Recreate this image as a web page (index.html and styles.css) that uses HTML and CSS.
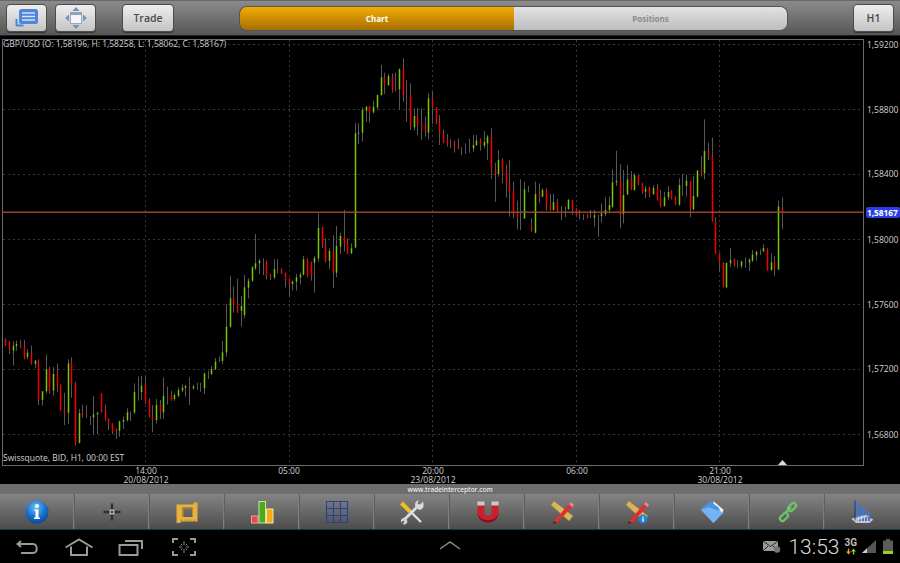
FILE: index.html
```html
<!DOCTYPE html>
<html lang="en">
<head>
<meta charset="utf-8">
<title>Trade Interceptor chart</title>
<link rel="stylesheet" href="styles.css">
</head>
<body>
<div class="app">
  <header class="topbar">
    <button class="btn btn-icon">
      <svg width="26" height="20" viewBox="0 0 26 20"><path d="M2.500 11v6.500h7" fill="none" stroke="#4a86dc" stroke-width="2" stroke-linejoin="round"/><rect x="5" y="1" width="19" height="15" rx="2.500" fill="#4f86dc"/><path d="M8 5h13M8 8.500h13M8 12h13" stroke="#d5e3f6" stroke-width="1.600"/></svg>
    </button>
    <button class="btn btn-icon">
      <svg width="24" height="24" viewBox="0 0 24 24"><path d="M12 1l3.500 4h-7zM12 23l-3.500-4h7zM1 12l4-3.500v7zM23 12l-4 3.500v-7z" fill="#6d94c8"/><rect x="6.500" y="6.500" width="11" height="11" fill="#f6f6f6" stroke="#a0a4aa"/><rect x="7" y="7" width="10" height="2" fill="#8fa4c0"/></svg>
    </button>
    <button class="btn btn-trade">Trade</button>
    <div class="tabs">
      <div class="tab tab-on">Chart</div>
      <div class="tab tab-off">Positions</div>
    </div>
    <button class="btn btn-h1">H1</button>
  </header>

  <main class="chart">
    <svg id="plot" class="plot" width="900" height="448" viewBox="0 36 900 448">
      <g id="grid"></g>
      <rect class="frame" x="2.500" y="39.500" width="861" height="426"/>
      <g id="candles"></g>
      <rect class="priceline" x="2" y="211.500" width="862" height="1.400"/>
      <text class="lbl" x="3" y="47">GBP/USD (O: 1,58196, H: 1,58258, L: 1,58062, C: 1,58167)</text>
      <text class="lbl" x="3" y="461">Swissquote, BID, H1, 00:00 EST</text>
      <path class="marker" d="M778 465l4.500-5 4.500 5z"/>
      <rect class="pricetag" x="866" y="207" width="34" height="11" rx="2"/>
      <text class="tagtext" x="867" y="216">1,58167</text>
      <g id="axis"></g>
    </svg>
  </main>

  <div class="strip">www.tradeinterceptor.com</div>

  <nav class="tools">
    <div class="tool">
      <svg width="28" height="28" viewBox="0 0 28 28"><defs><radialGradient id="ib" cx="45%" cy="30%" r="75%"><stop offset="0" stop-color="#6fc0f5"/><stop offset=".55" stop-color="#1a72cc"/><stop offset="1" stop-color="#0a3f96"/></radialGradient></defs><circle cx="14" cy="14" r="11.500" fill="url(#ib)"/><circle cx="14" cy="8" r="2" fill="#fff"/><path d="M11.500 11.500h4v8h1.500v1.500h-6v-1.500h1.500v-6.500h-1z" fill="#fff"/></svg>
    </div>
    <div class="tool">
      <svg width="28" height="28" viewBox="0 0 28 28"><path d="M14 5.500v7M14 15.500v7M5.500 14h7M15.500 14h7" stroke="#2b3238" stroke-width="2.400"/><rect x="11.500" y="11.500" width="5" height="5" fill="#a9b8c2"/><rect x="13" y="13" width="2" height="2" fill="#2b3238"/></svg>
    </div>
    <div class="tool">
      <svg width="28" height="28" viewBox="0 0 28 28"><path fill-rule="evenodd" d="M3.500 6.500h17v-2h4v19h-17v1.500h-4zM9.500 9.500v9.500h10v-9.500z" fill="#e8b13f"/><path d="M9.500 9.500h10v1.500h-8.500v8h-1.500z" fill="#a87c28"/><path d="M9 21.500v1.500M12 21.500v1.500M15 21.500v1.500M18 21.500v1.500M21 21.500v1.500" stroke="#a87c28"/></svg>
    </div>
    <div class="tool">
      <svg width="28" height="28" viewBox="0 0 28 28"><rect x="3.500" y="18" width="6.500" height="7" fill="#e84a4a" stroke="#f2a0a0"/><rect x="11" y="3.500" width="6.500" height="21.500" fill="#4fa81a" stroke="#c0e6a0"/><rect x="18.500" y="11" width="6.500" height="14" fill="#f4a91c" stroke="#fbe2a5"/></svg>
    </div>
    <div class="tool">
      <svg width="28" height="28" viewBox="0 0 28 28"><path d="M3.500 3.500h21v21h-21zM3.500 10.500h21M3.500 17.500h21M10.500 3.500v21M17.500 3.500v21" fill="none" stroke="#24409a" stroke-width="1.100"/></svg>
    </div>
    <div class="tool">
      <svg width="28" height="28" viewBox="0 0 28 28"><path d="M11 12L23 24" stroke="#e6e6e6" stroke-width="2.200"/><path d="M3.500 5L12 13.500" stroke="#f0c020" stroke-width="4"/><path d="M19 9L7 21" stroke="#dcdcdc" stroke-width="2.800"/><path d="M25 3.500l-3 3-2.500-.5.500-2.500 1.500-1c-3.500-.5-5.500 3-4 6l3 3c3 1 5.500-1.500 5-5.500z" fill="#dadada"/><path d="M3 24.500c-1-3 2-5.500 5-4.500l1.500 3.500c-.5 2.500-3 3.500-5 2.500l2-2-1-1.500z" fill="#d6d6d6"/></svg>
    </div>
    <div class="tool">
      <svg width="28" height="28" viewBox="0 0 28 28"><path d="M4.500 7v7.500c0 6 4.500 10 10.500 10s10.500-4 10.500-10V7h-7v7.500c0 2-1.500 3.500-3.500 3.500s-3.500-1.500-3.500-3.500V7z" fill="#cb1f2d"/><path d="M4.500 14.500c0 6 4.500 10 10.500 10s10.500-4 10.500-10c-1 5-5 7.500-10.500 7.500S5.500 19.500 4.500 14.500z" fill="#86101c"/><path d="M4.500 3.500h7v4h-7zM18.500 3.500h7v4h-7z" fill="#c8ccce"/></svg>
    </div>
    <div class="tool">
      <svg width="28" height="28" viewBox="0 0 28 28"><path d="M6 3l19 15-4 5L3 7z" fill="#d8b45a" stroke="#a88a3a" stroke-width=".5"/><path d="M6 23l15-17 3 3-15 16-4.500 1z" fill="#de2e2e"/><path d="M21 6l2-2 3 3-2 2z" fill="#e88a8a"/><path d="M4.500 26l1.500-3 3 2z" fill="#33302c"/></svg>
    </div>
    <div class="tool">
      <svg width="28" height="28" viewBox="0 0 28 28"><path d="M6 3l19 15-4 5L3 7z" fill="#d8b45a" stroke="#a88a3a" stroke-width=".5"/><path d="M6 23l15-17 3 3-15 16-4.500 1z" fill="#de2e2e"/><path d="M21 6l2-2 3 3-2 2z" fill="#e88a8a"/><path d="M4.500 26l1.500-3 3 2z" fill="#33302c"/><circle cx="20" cy="21" r="4.500" fill="#2a80d8"/><path d="M19.300 18.500h1.400v1h-1.400zM19.300 20.300h1.400v3.300h-1.400z" fill="#fff"/></svg>
    </div>
    <div class="tool">
      <svg width="28" height="28" viewBox="0 0 28 28"><path d="M15.500 3.200l10 8.600-1 4-10-6z" fill="#f2f5f8"/><path d="M2.800 10.800l9.400-7.600 8 6 2 3-8 4z" fill="#4f92de"/><path d="M2.800 11.800l8-2.500 14.700 5-10 10.900z" fill="#74b4f4"/></svg>
    </div>
    <div class="tool">
      <svg width="28" height="28" viewBox="0 0 28 28"><path d="M10 17.500l-3.500 3.500a2.500 2.500 0 0 0 3.500 3.500L13.500 21a2.500 2.500 0 0 0-3.500-3.500zM18 7.500L14.500 11a2.500 2.500 0 0 0 3.500 3.500L21.500 11A2.500 2.500 0 0 0 18 7.500zM11 17l6-6" transform="translate(1 -2)" fill="none" stroke="#6bc46b" stroke-width="2.300"/></svg>
    </div>
    <div class="tool">
      <svg width="28" height="28" viewBox="0 0 28 28"><path d="M2.500 21l11-4 11 4.500-4 3.500H7z" fill="#c0c6cc"/><path d="M7 3.500h2v19H7zM10 8h2v15h-2zM13 9h2v14h-2zM16 11h2v12h-2zM19 14h2v9h-2z" fill="#4578cc"/><path d="M2.500 21l14-4 4 1-14 5z" fill="#dfe6ee" opacity=".7"/><path d="M6 2.500v20" stroke="#1e3a70"/></svg>
    </div>
  </nav>

  <footer class="sysbar">
    <div class="sys-left">
      <svg width="24" height="16" viewBox="0 0 24 16"><path d="M5 2L1.500 5 5 8M2 5h15c5 0 5 9 0 9H5" fill="none" stroke="#999" stroke-width="2"/></svg>
      <svg width="30" height="18" viewBox="0 0 30 18"><path d="M1.500 9.500L15 1.500l13.500 8M7 8.500v8.500h16V8.500" fill="none" stroke="#999" stroke-width="2"/></svg>
      <svg width="26" height="18" viewBox="0 0 26 18"><path d="M1.500 7h18v10h-18z" fill="none" stroke="#999" stroke-width="2"/><path d="M7 3h17v8" fill="none" stroke="#999" stroke-width="2"/></svg>
      <svg class="snap" width="24" height="18" viewBox="0 0 24 18"><path d="M1 5V1h5M18 1h5v4M23 13v4h-5M6 17H1v-4" fill="none" stroke="#999" stroke-width="2"/><path d="M12 3v4M12 11v4M7 9h3M14 9h3M9 6l1.500 1.500M15 6l-1.500 1.500M9 12l1.500-1.500M15 12l-1.500-1.500" stroke="#888"/></svg>
    </div>
    <svg class="chev" width="22" height="9" viewBox="0 0 22 9"><path d="M1 8l10-7 10 7" fill="none" stroke="#8a8a8a" stroke-width="1.500"/></svg>
    <div class="status">
      <svg width="18" height="13" viewBox="0 0 18 13"><rect x="0" y="1" width="15" height="10" fill="#9a9a9a"/><path d="M0 1l7.500 5.500L15 1M0 11l5-5M15 11l-5-5" fill="none" stroke="#2a2a2a"/><circle cx="14" cy="9.500" r="3.200" fill="#777"/></svg>
      <span class="clock">13:53</span>
      <div class="net">
        <span class="net-type">3G</span>
        <svg width="10" height="7" viewBox="0 0 10 6"><path d="M2.500 6L0 3h1.800V0h1.400v3H5z" fill="#f09a20"/><path d="M7.500 0L10 3H8.200v3H6.800V3H5z" fill="#8ccc30"/></svg>
      </div>
      <svg class="signal" width="15" height="13" viewBox="0 0 15 13"><path d="M0 13L14 0v13z" fill="#555"/><path d="M0 13l5-4.700V13z" fill="#cfcfcf"/></svg>
      <svg width="10" height="15" viewBox="0 0 10 15"><path d="M3 0h4v1.500h3V15H0V1.500h3z" fill="#5a5a5a"/><rect x="0" y="12" width="10" height="3" fill="#96d21e"/></svg>
    </div>
  </footer>
</div>
<script src="chart.js"></script>
</body>
</html>
```
FILE: styles.css
```css
* { box-sizing: border-box; }
html, body { margin: 0; padding: 0; background: #000; }
.app {
  width: 900px;
  height: 563px;
  overflow: hidden;
  display: flex;
  flex-direction: column;
  font-family: "Open Sans", "Noto Sans", sans-serif;
}
.topbar {
  height: 36px;
  flex: none;
  display: flex;
  align-items: center;
  padding-left: 6px;
  background: linear-gradient(#8b8b8b, #565656);
  border-top: 1px solid #666;
  border-bottom: 1px solid #222;
}
.btn {
  width: 41px;
  height: 28px;
  padding: 0;
  display: flex;
  align-items: center;
  justify-content: center;
  border: 1px solid #4c4c4c;
  border-radius: 4px;
  background: linear-gradient(#eeeeee, #c4c4c4);
  box-shadow: 0 1px 0 #333;
  color: #4a4a4a;
  font-family: inherit;
  font-size: 10.500px;
  font-weight: 600;
}
.btn-icon + .btn-icon { margin-left: 8px; }
.btn-trade { width: 52px; margin-left: 26px; }
.tabs {
  width: 547px;
  height: 23px;
  margin-left: 66px;
  display: flex;
  border-radius: 7px;
  overflow: hidden;
  box-shadow: 0 0 0 1px #555;
}
.tab {
  display: flex;
  align-items: center;
  justify-content: center;
  font-size: 8px;
  font-weight: 700;
}
.tab-on { width: 274px; color: #fff; background: linear-gradient(#f6ad00, #a66e04); }
.tab-off { flex: 1; color: #8c8c8c; background: linear-gradient(#e2e2e2, #bdbdbd); }
.btn-h1 { margin-left: 66px; }
.chart { height: 448px; flex: none; background: #000; }
.plot { display: block; }
.frame { fill: none; stroke: #6b6b6b; stroke-width: 1; }
.gridline { stroke: #363636; stroke-width: 1; stroke-dasharray: 2 3; }
.wick { fill: #585858; }
.body-g { fill: #76c802; }
.body-r { fill: #f20000; }
.priceline { fill: #a04a2a; }
.marker { fill: #cfdcec; }
.pricetag { fill: #2a3ee8; }
.lbl, .axis-y, .axis-x, .tagtext {
  font-family: "Open Sans", "Noto Sans", sans-serif;
  font-size: 8.500px;
  fill: #d2d2d2;
}
.axis-x { text-anchor: middle; }
.tagtext { fill: #fff; font-weight: 700; font-size: 8.300px; }
.strip {
  height: 10px;
  flex: none;
  display: flex;
  align-items: center;
  justify-content: center;
  background: #6e6e6e;
  color: #e6e6e6;
  font-size: 6.500px;
  font-weight: 600;
}
.tools {
  height: 36px;
  flex: none;
  display: grid;
  grid-template-columns: repeat(12, 75px);
  background: linear-gradient(#848484, #4c4c4c);
  border-bottom: 1px solid #1d3a4c;
}
.tool {
  display: flex;
  align-items: center;
  justify-content: center;
  border-right: 1px solid #5e5e5e;
  box-shadow: inset -1px 0 0 #7e7e7e;
}
.tool:last-child { border-right: 0; box-shadow: none; }
.sysbar {
  flex: 1;
  display: grid;
  grid-template-columns: 1fr auto 1fr;
  align-items: center;
  background: #000;
}
.sys-left {
  display: flex;
  align-items: center;
  gap: 24px;
  padding-left: 16px;
}
.snap { margin-left: 4px; }
.chev { margin-top: -3px; }
.status {
  display: flex;
  align-items: center;
  justify-content: flex-end;
  padding-right: 7px;
}
.clock {
  margin: 0 5px 0 7px;
  font-family: Roboto, "Open Sans", sans-serif;
  font-size: 21px;
  font-weight: 300;
  line-height: 24px;
  color: #d8d8d8;
}
.net {
  display: flex;
  flex-direction: column;
  align-items: center;
  margin-right: 5px;
}
.net-type {
  font-family: Roboto, sans-serif;
  font-size: 10px;
  font-weight: 700;
  line-height: 10px;
  color: #bdbdbd;
}
.signal { margin-right: 6px; }
```
FILE: chart.js
```js
// Candles as colour + wick top, body top, body bottom, wick bottom.
// Each block is measured at 3x from the y origin given first.
// r red, g green, n no visible body.
var blocks = [
  [230, "r325,330,345,348 r333,337,360,372 g333,347,362,407 g332,342,348,362 r330,345,352,355 r330,352,382,388 g358,368,381,388 r346,370,402,404 g390,392,402,415 r388,394,508,525 g483,484,510,527 g374,418,484,490 r410,417,483,491 g412,432,482,497 r400,432,468,487 r463,465,540,542 r488,540,550,585 g388,400,548,582 r382,399,465,503 r455,460,640,647 g537,549,638,641 r524,549,556,563 n526,556,558,563 n558,558,560,585 g498,553,562,612 g545,548,553,612 r490,490,543,548 r524,544,565,572 r565,565,582,600 r580,581,605,612 r595,597,604,627 g572,574,603,620 g560,570,575,597 g535,547,570,575 n545,545,548,573 g460,486,547,552 n440,486,487,512 g438,467,486,510 r438,465,515,522 r505,510,560,563 r525,560,570,607 g507,525,570,580 r510,525,547,567 g442,498,547,567 n470,495,497,524 r482,495,510,512 g490,495,507,512 g472,480,498,502 g463,473,481,486 g465,468,473,500 r442,472,475,525 g465,469,475,478 n458,472,473,480 n458,470,472,485 g428,430,475,492 n422,430,431,447 g408,418,432,435 g384,395,417,420 n380,392,393,397 g333,367,393,402 g222,290,367,380 g138,205,290,292 r170,205,224,248 r146,225,245,248"],
  [50, "g738,768,782,830 g675,712,795,805 g685,692,713,745 g648,652,692,695 g552,640,655,660 g628,632,640,672 n625,632,634,675 r632,636,678,688 r672,676,682,690 g628,657,682,688 n628,655,657,670 r655,657,670,672 r668,670,690,712 r685,688,702,742 g692,695,702,722 g672,682,695,722 g668,674,682,702 g618,628,674,676 r625,628,676,682 r635,638,678,692 g618,624,638,728 g490,534,625,635 r530,532,585,595 r565,587,632,638 g595,603,632,658 r555,602,668,715 g528,588,668,682 g548,558,590,612 r480,558,582,605 r565,578,610,612 g580,595,610,612 g220,250,592,595 g220,248,250,282 g172,180,248,275 g168,170,182,215 r168,170,187,218 g152,170,187,190 g135,135,172,178 g45,82,135,137 r68,82,105,132 g72,78,105,108 r70,80,118,128 r68,115,120,125 g55,58,118,178 r25,57,135,155 n90,135,136,215 r100,135,225,240 g175,198,232,242 r175,198,225,255 r175,222,230,270 r200,228,246,260 g130,145,248,268 r125,145,170,222 r172,172,220,222 r195,220,250,285 r238,252,277,280 r252,270,280,290"],
  [80, "n178,190,192,205 r182,186,197,218 r175,198,205,208 n202,204,206,225 n190,204,206,222 n176,205,207,218 g165,195,205,215 g165,182,195,198 r175,181,195,212 g153,186,197,205 g165,170,190,240 r145,170,268,297 r248,270,282,365 g210,240,282,290 r235,240,275,310 r255,274,312,353 r240,313,333,410 r305,333,402,415 r362,402,412,448 n298,410,412,450 g305,328,415,417 n318,328,332,337 r415,440,453,455 g305,342,458,460 r310,342,352,368 g325,330,350,352 r325,330,378,392 r342,375,390,392 g342,366,390,392 r357,366,392,395 n380,392,394,420 n380,392,394,412 g357,360,387,390 r360,362,390,405 r385,388,407,410 n390,405,407,418 n402,410,412,420 r402,405,413,416 n390,405,407,414 g390,406,413,440 n405,408,409,470 g370,400,408,428 g352,390,402,408 g350,375,390,400"],
  [110, "g178,217,290,295 g122,213,217,228 r163,213,315,355 g180,255,312,340 g165,208,253,255 r183,207,238,240 g190,195,240,242 r195,196,220,225 r218,222,245,252 g228,236,245,265 r230,234,252,262 g225,234,252,255 r222,234,268,272 r240,265,288,292 g245,262,288,290 g228,246,262,270 r240,242,265,268 r258,264,282,285 g205,225,284,287 n192,224,226,258 g195,212,228,260 r212,213,298,322 g198,258,298,300 g180,182,260,262 r138,180,190,200 g28,123,190,208 r98,124,137,150 r82,138,333,335 r322,334,430,432 r428,430,456,487 r456,457,530,532 g458,459,532,535 g413,450,460,472 r445,449,466,470 n450,465,466,475 g452,454,468,475 n442,454,458,474 g445,449,458,483 g420,434,452,456 g423,425,436,452 n418,430,431,435 g403,414,424,426 r415,416,480,482 g430,457,480,482 r438,458,475,498 g272,290,478,480 r262,292,305,358"]
];

var NS = "http://www.w3.org/2000/svg";
function el(parent, name, attrs, text) {
  var n = document.createElementNS(NS, name);
  for (var k in attrs) n.setAttribute(k, attrs[k]);
  if (text) n.textContent = text;
  parent.appendChild(n);
  return n;
}

var candles = document.getElementById("candles");
var index = 0;
blocks.forEach(function (block) {
  block[1].split(" ").forEach(function (row) {
    var kind = row.charAt(0);
    var v = row.slice(1).split(",").map(function (n) { return block[0] + Number(n) / 3; });
    var x = Math.floor(5.67 + 3.68 * index);
    el(candles, "rect", { "class": "wick", x: x, y: v[0], width: 1, height: v[3] - v[0] });
    if (kind !== "n") {
      el(candles, "rect", { "class": "body-" + kind, x: x - 0.25, y: v[1], width: 1.5, height: Math.max(v[2] - v[1], 1) });
    }
    index++;
  });
});

var grid = document.getElementById("grid");
[44.5, 109.5, 174.5, 239.5, 304.5, 369.5, 434.5].forEach(function (y) {
  el(grid, "line", { "class": "gridline", x1: 3, x2: 863, y1: y, y2: y });
});
[145.5, 289.5, 432.5, 576.5, 719.5].forEach(function (x) {
  el(grid, "line", { "class": "gridline", x1: x, x2: x, y1: 40, y2: 465 });
});

var axis = document.getElementById("axis");
[["1,59200", 48], ["1,58800", 113], ["1,58400", 177], ["1,58000", 243], ["1,57600", 308], ["1,57200", 372], ["1,56800", 438]].forEach(function (t) {
  el(axis, "text", { "class": "axis-y", x: 867, y: t[1] }, t[0]);
});
[["14:00", 146, 20], ["05:00", 289], ["20:00", 433, 23], ["06:00", 577], ["21:00", 720, 30]].forEach(function (t) {
  var label = el(axis, "text", { "class": "axis-x", y: 474 });
  el(label, "tspan", { x: t[1] }, t[0]);
  if (t[2]) el(label, "tspan", { x: t[1], dy: 8.5 }, t[2] + "/08/2012");
});
```
